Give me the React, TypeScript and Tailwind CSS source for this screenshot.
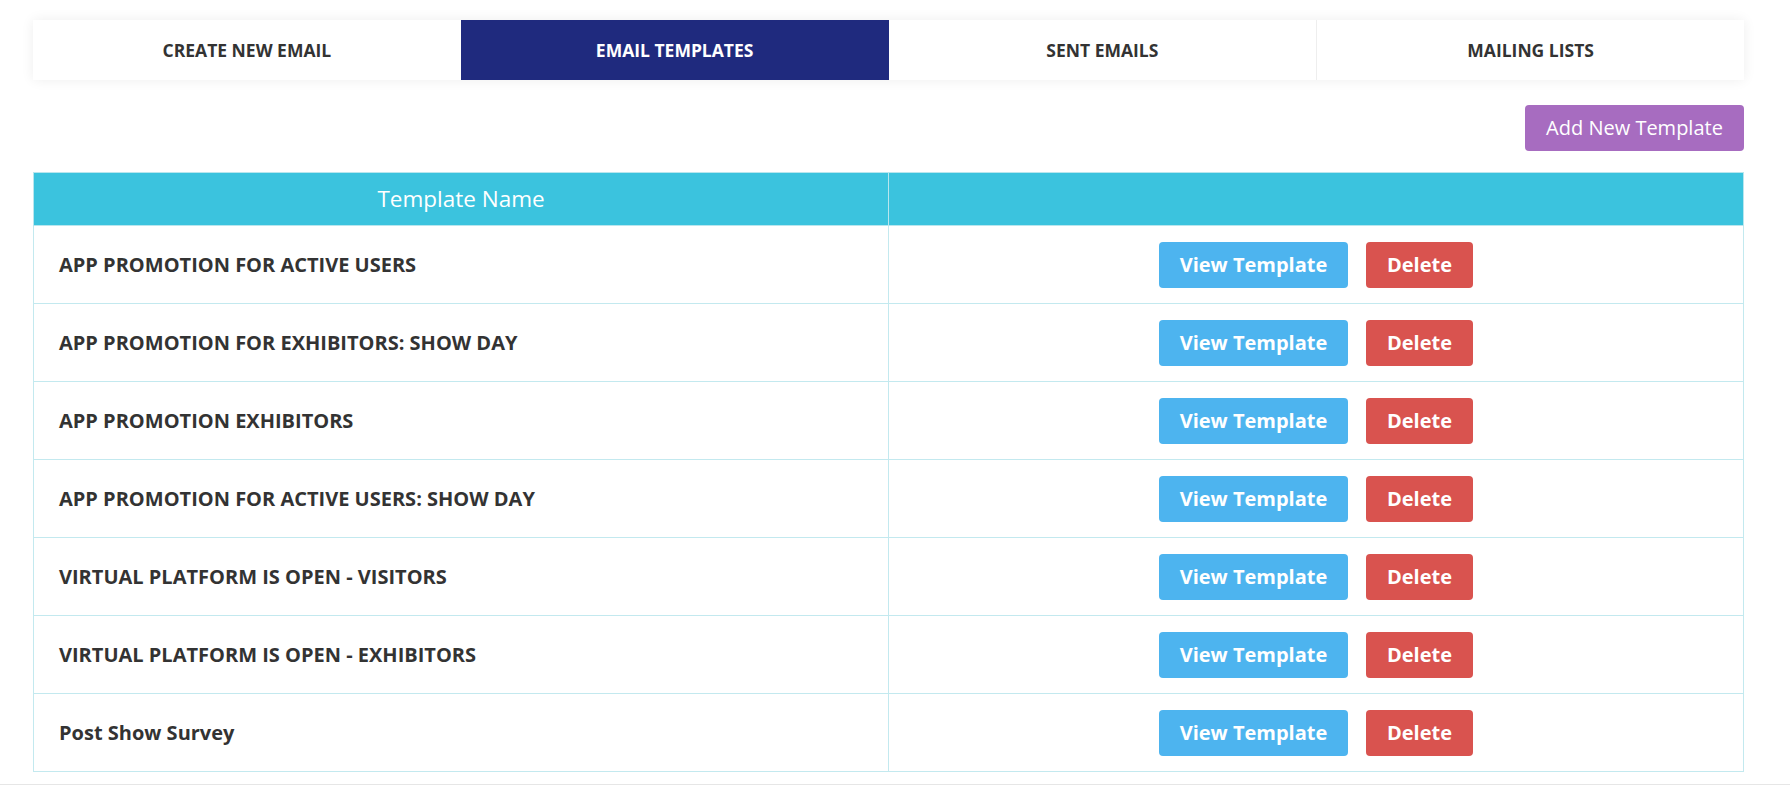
import React from "react";

const rows = [
  "APP PROMOTION FOR ACTIVE USERS",
  "APP PROMOTION FOR EXHIBITORS: SHOW DAY",
  "APP PROMOTION EXHIBITORS",
  "APP PROMOTION FOR ACTIVE USERS: SHOW DAY",
  "VIRTUAL PLATFORM IS OPEN - VISITORS",
  "VIRTUAL PLATFORM IS OPEN - EXHIBITORS",
  "Post Show Survey",
];

const tabs = ["CREATE NEW EMAIL", "EMAIL TEMPLATES", "SENT EMAILS", "MAILING LISTS"];

export default function App() {
  return (
    <div
      className="min-h-[788px] bg-white text-[#333]"
      style={{ fontFamily: '"Open Sans", "Noto Sans", sans-serif' }}
    >
      <div className="border-b border-[#e6e6e6] pl-[33px] pr-[46px] pt-[20px] pb-[12px]">
        <div className="grid h-[60px] grid-cols-4 bg-white shadow-[0_0_12px_rgba(0,0,0,0.07)]">
          {tabs.map((t, i) => (
            <div
              key={t}
              className={
                i === 1
                  ? "flex items-center justify-center bg-[#1f2a7e] text-[17.5px] font-bold text-white"
                  : i === 3
                  ? "flex items-center justify-center border-l border-[#eeeeee] text-[17.5px] font-bold text-[#333]"
                  : "flex items-center justify-center text-[17.5px] font-bold text-[#333]"
              }
            >
              {t}
            </div>
          ))}
        </div>
        <div className="mt-[25px] flex justify-end">
          <button className="h-[46px] w-[219px] rounded-[4px] bg-[#a76cc0] text-[20px] text-white">
            Add New Template
          </button>
        </div>
        <table className="mt-[21px] w-full table-fixed border-collapse">
          <thead>
            <tr className="h-[53px] bg-[#3bc3de]">
              <th className="border border-[#b8e6ee] text-center text-[22.5px] font-normal text-white">
                Template Name
              </th>
              <th className="border border-[#b8e6ee] border-l-[#2fb3cd]"></th>
            </tr>
          </thead>
          <tbody>
            {rows.map((r) => (
              <tr key={r} className="h-[78px]">
                <td className="border border-[#c3e9ef] pl-[25px] text-left text-[20px] font-bold text-[#333]">
                  {r}
                </td>
                <td className="border border-[#c3e9ef]">
                  <div className="flex items-center justify-center gap-[18px]">
                    <button className="h-[46px] w-[189px] rounded-[4px] bg-[#4db4ef] text-[20px] font-bold text-white">
                      View Template
                    </button>
                    <button className="h-[46px] w-[107px] rounded-[4px] bg-[#d9534f] text-[20px] font-bold text-white">
                      Delete
                    </button>
                  </div>
                </td>
              </tr>
            ))}
          </tbody>
        </table>
      </div>
    </div>
  );
}
